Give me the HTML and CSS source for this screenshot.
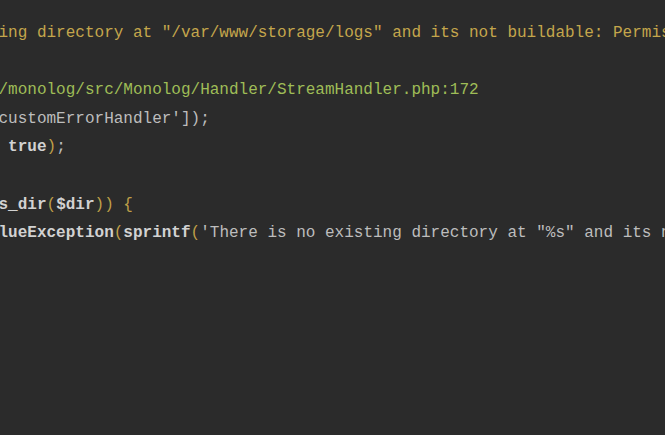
FILE: index.html
```html
<!DOCTYPE html>
<html>
<head>
<meta charset="utf-8">
<link rel="stylesheet" href="styles.css">
</head>
<body>
<div class="viewport">
<pre class="code"><span class="msg">ting directory at "/var/www/storage/logs" and its not buildable: Permission denied</span>

<span class="path">g/monolog/src/Monolog/Handler/StreamHandler.php:172</span>
'customErrorHandler']);
, <b>true</b><span class="br">)</span>;

<b>is_dir</b><span class="br">(</span><b>$dir</b><span class="br">))</span> <span class="br">{</span>
<b>alueException</b><span class="br">(</span><b>sprintf</b><span class="br">(</span>'There is no existing directory at "%s" and its not buildable: %s', <b>$dir</b>, <b>$status</b><span class="br">))</span>;
</pre>
</div>
</body>
</html>
```

FILE: styles.css
```css
html, body {
  margin: 0;
  padding: 0;
  background: #2b2b2b;
  width: 665px;
  height: 435px;
  overflow: hidden;
}

.viewport {
  width: 665px;
  height: 435px;
  overflow: hidden;
  padding-top: 19px;
  box-sizing: border-box;
}

.code {
  margin: 0 0 0 -11.1px;
  font-family: "Courier New", "Nimbus Mono PS", "Nimbus Mono L", "FreeMono", "Liberation Mono", monospace;
  font-size: 16px;
  line-height: 28.6px;
  color: #bdbdbd;
  white-space: pre;
}

.msg {
  color: #c4a64c;
}

.path {
  color: #9fbd57;
}

.code b {
  font-weight: bold;
  color: #d2d2d2;
}

.br {
  color: #bf9f48;
}
```
